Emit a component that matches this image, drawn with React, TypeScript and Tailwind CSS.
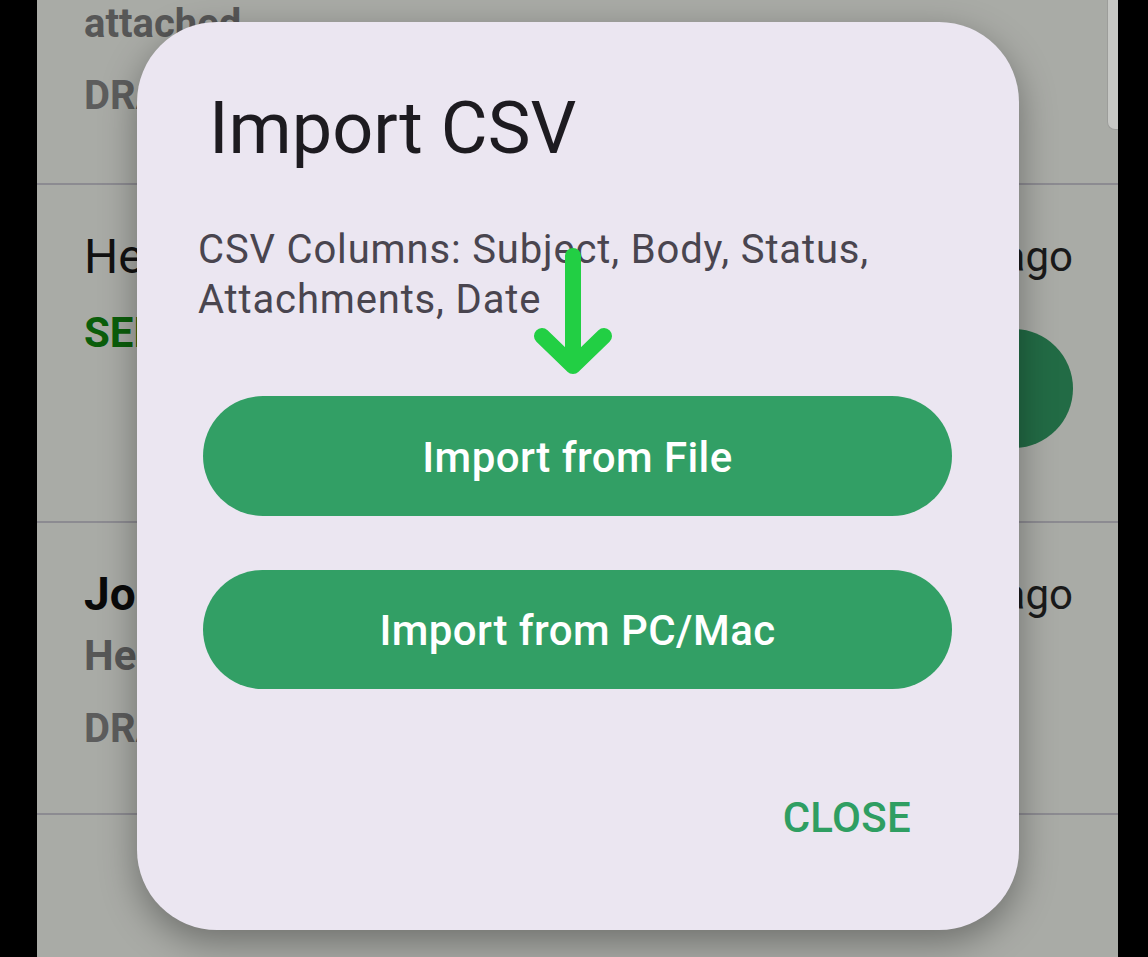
import React from "react";

export default function App() {
  return (
    <div
      className="flex w-[1148px] h-[957px] overflow-hidden bg-black"
      style={{ fontFamily: "Roboto, 'Liberation Sans', sans-serif" }}
    >
      <div className="w-[37px] shrink-0 bg-black" />
      <div className="relative flex-1 bg-[#a9aba6] overflow-hidden">
        {/* Row 1 */}
        <div className="h-[183px] pl-[47px] flex flex-col">
          <div className="text-[40px] leading-[48px] font-bold text-[#575757]">attached</div>
          <div className="mt-[24px] text-[40px] leading-[48px] font-bold text-[#5d5d5d]">DRAFT</div>
        </div>
        <div className="h-[2px] bg-[#8c8b91]" />
        {/* Row 2 */}
        <div className="h-[336px] pl-[47px] pr-[45px] flex justify-between">
          <div className="flex flex-col pt-[44px]">
            <div className="text-[48px] leading-[56px] text-[#111111]">Hello there</div>
            <div className="mt-[23px] text-[42px] leading-[50px] font-bold text-[#0b5e0b]">SENT</div>
          </div>
          <div className="flex flex-col items-end pt-[47px]">
            <div className="text-[42px] leading-[50px] text-[#1a1a1a]">2 hours ago</div>
            <div className="mt-[47px] w-[119px] h-[119px] rounded-full bg-[#226b45]" />
          </div>
        </div>
        <div className="h-[2px] bg-[#8c8b91]" />
        {/* Row 3 */}
        <div className="h-[290px] pl-[47px] pr-[45px] flex justify-between">
          <div className="flex flex-col pt-[44px]">
            <div className="text-[46px] leading-[54px] font-bold text-[#0a0a0a]">John Smith</div>
            <div className="mt-[10px] text-[42px] leading-[50px] font-bold text-[#575757]">Hello world</div>
            <div className="mt-[24px] text-[40px] leading-[48px] font-bold text-[#5d5d5d]">DRAFT</div>
          </div>
          <div className="flex flex-col items-end pt-[47px]">
            <div className="text-[42px] leading-[50px] text-[#1a1a1a]">3 hours ago</div>
          </div>
        </div>
        <div className="h-[2px] bg-[#8c8b91]" />

        {/* Scrollbar */}
        <div className="absolute right-0 top-0 w-[11px] h-[130px] bg-[#c6c7c4] border-l border-b border-[#9c9d9a] rounded-bl-[8px]" />

        {/* Dialog */}
        <div className="absolute left-[100px] top-[22px] w-[882px] h-[908px] rounded-[80px] bg-[#ebe6f1] shadow-[0_12px_36px_rgba(0,0,0,0.35)] flex flex-col pt-[65px] pl-[66px] pr-[67px]">
          <div className="ml-[6px] text-[72px] leading-[84px] text-[#1d1b20]">Import CSV</div>
          <div className="mt-[54px] -ml-[5px] text-[40px] leading-[50px] tracking-[0.85px] text-[#49454f]">
            CSV Columns: Subject, Body, Status,
            <br />
            Attachments, Date
          </div>
          <button className="mt-[71px] h-[120px] w-full rounded-full bg-[#329f65] flex items-center justify-center pt-[2px] text-white text-[42px] font-medium tracking-[0.45px]">
            Import from File
          </button>
          <button className="mt-[54px] h-[119px] w-full rounded-full bg-[#329f65] flex items-center justify-center pt-[2px] text-white text-[42px] font-medium tracking-[0.45px]">
            Import from PC/Mac
          </button>
          <div className="mt-[105px] flex justify-end pr-[41px]">
            <span className="text-[42px] leading-[48px] font-medium tracking-[0.3px] text-[#2f9e62]">CLOSE</span>
          </div>

          {/* Arrow overlay */}
          <svg
            className="absolute left-[383px] top-[218px]"
            width="110"
            height="145"
            viewBox="0 0 110 145"
            fill="none"
          >
            <path
              d="M53 16 V126 M22 96 L53 126 L84 96"
              stroke="#22cf44"
              strokeWidth="16"
              strokeLinecap="round"
              strokeLinejoin="round"
            />
          </svg>
        </div>
      </div>
      <div className="w-[30px] shrink-0 bg-black" />
    </div>
  );
}
